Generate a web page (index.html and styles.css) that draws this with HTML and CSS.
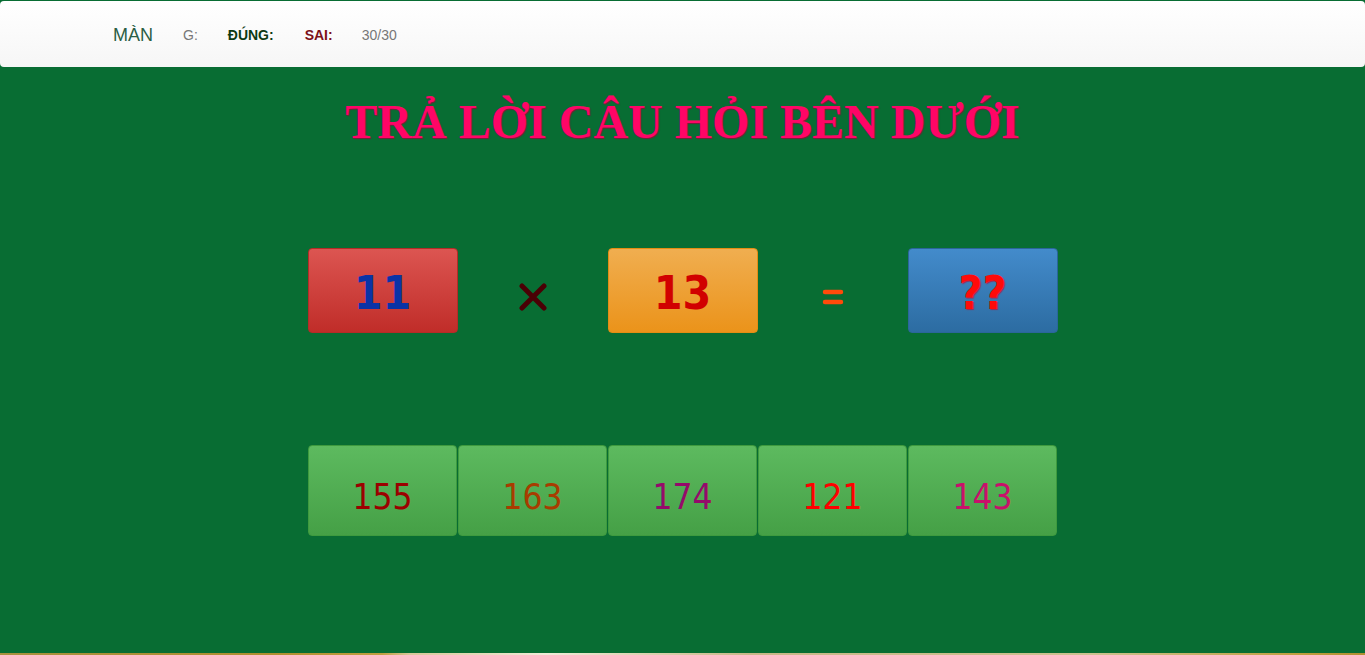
FILE: index.html
```html
<!DOCTYPE html>
<html lang="vi">
<head>
<meta charset="utf-8">
<title>Trả lời câu hỏi</title>
<link rel="stylesheet" href="styles.css">
</head>
<body>
<div class="page">
  <nav class="navbar">
    <span class="nav-level">MÀN</span>
    <span class="nav-gray nav-g">G:</span>
    <span class="nav-right">ĐÚNG:</span>
    <span class="nav-wrong">SAI:</span>
    <span class="nav-gray">30/30</span>
  </nav>
  <main class="main">
    <h1 class="title">TRẢ LỜI CÂU HỎI BÊN DƯỚI</h1>
    <div class="equation">
      <div class="num-box box-red"><span class="num num-blue">11</span></div>
      <div class="op">
        <svg class="op-icon" width="28" height="28" viewBox="0 0 28 28" aria-label="nhân">
          <path d="M3 3 L25 25 M25 3 L3 25" stroke="#4a0005" stroke-width="5" stroke-linecap="round" fill="none"/>
        </svg>
      </div>
      <div class="num-box box-orange"><span class="num num-red">13</span></div>
      <div class="op">
        <svg class="op-icon" width="22" height="16" viewBox="0 0 22 16" aria-label="bằng">
          <path d="M3 3 H19 M3 13 H19" stroke="#ff4a0a" stroke-width="4.5" stroke-linecap="round" fill="none"/>
        </svg>
      </div>
      <div class="num-box box-blue"><span class="num num-q">??</span></div>
    </div>
    <div class="answers">
      <button class="ans c1">155</button>
      <button class="ans c2">163</button>
      <button class="ans c3">174</button>
      <button class="ans c4">121</button>
      <button class="ans c5">143</button>
    </div>
  </main>
  <div class="strip"></div>
</div>
</body>
</html>
```
FILE: styles.css
```css
html, body {
  margin: 0;
  padding: 0;
}
body {
  background: #086d33;
  font-family: "Liberation Sans", Arial, sans-serif;
  overflow: hidden;
}
.page {
  height: 655px;
  display: flex;
  flex-direction: column;
}
.navbar {
  margin-top: 1px;
  height: 66px;
  box-sizing: border-box;
  border-radius: 4px;
  background: linear-gradient(to bottom, #ffffff 0%, #f6f6f6 100%);
  display: flex;
  align-items: center;
  padding-left: 113px;
  padding-top: 1px;
}
.nav-level {
  font-size: 18px;
  color: #2b5e45;
  margin-right: 30px;
  padding-top: 2px;
}
.nav-gray {
  font-size: 14px;
  color: #777777;
}
.nav-g {
  margin-right: 30px;
}
.nav-right {
  font-size: 14px;
  font-weight: bold;
  color: #0d3a12;
  margin-right: 31px;
}
.nav-wrong {
  font-size: 14px;
  font-weight: bold;
  color: #7d1018;
  margin-right: 29px;
}
.main {
  flex: 1;
  display: flex;
  flex-direction: column;
  align-items: center;
}
.title {
  margin: 27px 0 0 0;
  font-family: "Liberation Serif", "Times New Roman", serif;
  font-weight: bold;
  font-size: 48px;
  line-height: 56px;
  color: #ff0566;
  text-shadow: 1px 1px 1px #7a1a3a;
}
.equation {
  margin-top: 98px;
  display: grid;
  grid-template-columns: repeat(5, 150px);
  align-items: center;
}
.num-box {
  width: 150px;
  height: 85px;
  box-sizing: border-box;
  border-radius: 4px;
  display: flex;
  align-items: center;
  justify-content: center;
}
.box-red {
  background: linear-gradient(to bottom, #dc5551 0%, #c02d29 100%);
  border: 1px solid #b52b27;
}
.box-orange {
  background: linear-gradient(to bottom, #f0ae50 0%, #eb931a 100%);
  border: 1px solid #e38d13;
}
.box-blue {
  background: linear-gradient(to bottom, #438bcb 0%, #2c6ca2 100%);
  border: 1px solid #2b669a;
}
.num {
  font-family: "DejaVu Sans Condensed", "Liberation Sans Narrow", "Liberation Sans", sans-serif;
  font-weight: bold;
  font-size: 46px;
  line-height: 1;
  margin-top: 4px;
}
.num-blue { color: #0a33a6; }
.num-red { color: #d10000; }
.num-q {
  color: #ff0a0a;
  text-shadow: 1px 1px 1px #9a2a55;
}
.op {
  display: flex;
  justify-content: center;
  align-items: center;
  padding-top: 12px;
}
.op-icon {
  display: block;
}
.answers {
  margin-top: 112px;
  display: flex;
  gap: 1px;
}
.ans {
  width: 149px;
  height: 91px;
  box-sizing: border-box;
  border: 1px solid #3e9a3e;
  border-radius: 4px;
  background: linear-gradient(to bottom, #5dba5f 0%, #45a046 100%);
  font-family: "DejaVu Sans Condensed", "Open Sans", sans-serif;
  font-size: 35px;
  padding: 13px 0 0 0;
  margin: 0;
  cursor: pointer;
}
.c1 { color: #9c0000; }
.c2 { color: #a83c00; }
.c3 { color: #950a6a; }
.c4 { color: #ff0000; }
.c5 { color: #c8106a; }
.strip {
  height: 2px;
  background: linear-gradient(to right, #a8923e 0%, #b09030 20%, #c0a040 28%, #d8c89a 30%, #f0ecd8 40%, #c8b888 55%, #ccc290 80%, #c0a040 95%, #b09030 100%);
}
```
